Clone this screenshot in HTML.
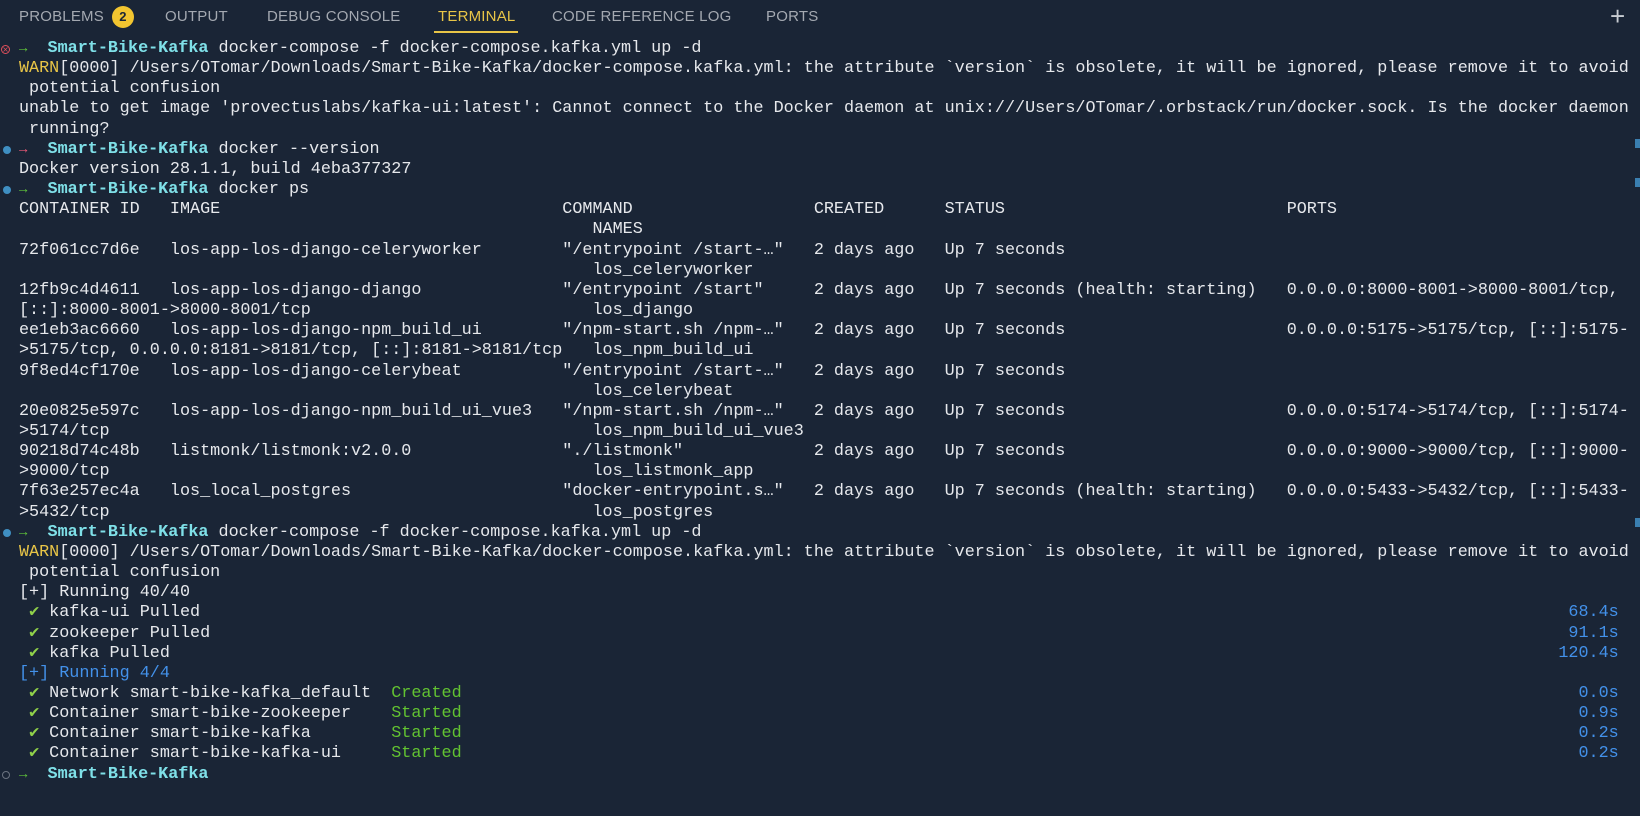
<!DOCTYPE html>
<html><head><meta charset="utf-8"><style>
html,body{margin:0;padding:0;background:#1a2536;width:1640px;height:816px;overflow:hidden}
.tabs{position:absolute;left:0;top:0;width:1640px;height:34px;font-family:"Liberation Sans",sans-serif;font-size:15px;color:#a4a9b1;letter-spacing:0.2px}
.tabs span{position:absolute;top:8px}
.badge{position:absolute;left:112px;top:6px;width:22px;height:22px;border-radius:50%;background:#f2c530;color:#1a2536;font-size:13px;font-weight:bold;text-align:center;line-height:22px}
.ul{position:absolute;left:434px;top:31px;width:84px;height:2px;background:#e8c547}
.term{position:absolute;left:19px;top:39px;font-family:"Liberation Mono",monospace;font-size:16.78px;color:#e6e8ec}
.l{position:relative;height:20.17px;line-height:20.17px;white-space:pre}
.l span.a{position:absolute;top:0}
.g{display:inline-block;width:1ch;text-align:center}
.ar{font-weight:bold;font-size:14px}
.cy{color:#7fe0e8;font-weight:bold}
.ga{color:#5fc43a}
.ra{color:#f05a78}
.w{color:#e8c547}
.b{color:#4391ea}
.gr{color:#62c231}
.ck{color:#8fd04a}
.m{position:absolute;left:-16px;top:6px;width:8px;height:8px;border-radius:50%}
.dot{background:#3f8fc2}
.x{border:1.3px solid #e0505c;width:7px;height:7px;left:-18px;color:#e0505c;font-size:8px;line-height:7px;text-align:center;font-style:normal;font-family:"DejaVu Sans",sans-serif}
.o{border:1.3px solid #6b7380;width:6px;height:6px;left:-17px}
.sb{position:absolute;left:1635px;width:5px;height:9px;background:#3a7fb0}
</style></head><body>
<div class="tabs">
<span style="left:19px">PROBLEMS</span><div class="badge">2</div>
<span style="left:165px">OUTPUT</span>
<span style="left:267px">DEBUG CONSOLE</span>
<span style="left:438px;color:#e8c547">TERMINAL</span>
<span style="left:552px">CODE REFERENCE LOG</span>
<span style="left:766px">PORTS</span>
<span style="left:1610px;top:1px;font-size:26px;font-weight:300;color:#c8ccd2">+</span>
</div>
<div class="ul"></div>
<div class="sb" style="top:139px"></div><div class="sb" style="top:178px"></div><div class="sb" style="top:518px"></div>
<div class="term">
<div class="l"><i class="m x">×</i><span class="g ga ar">→</span>  <span class="cy">Smart-Bike-Kafka</span> docker-compose -f docker-compose.kafka.yml up -d</div>
<div class="l"><span class="w">WARN</span>[0000] /Users/OTomar/Downloads/Smart-Bike-Kafka/docker-compose.kafka.yml: the attribute `version` is obsolete, it will be ignored, please remove it to avoid</div>
<div class="l"> potential confusion</div>
<div class="l">unable to get image 'provectuslabs/kafka-ui:latest': Cannot connect to the Docker daemon at unix:///Users/OTomar/.orbstack/run/docker.sock. Is the docker daemon</div>
<div class="l"> running?</div>
<div class="l"><i class="m dot"></i><span class="g ra ar">→</span>  <span class="cy">Smart-Bike-Kafka</span> docker --version</div>
<div class="l">Docker version 28.1.1, build 4eba377327</div>
<div class="l"><i class="m dot"></i><span class="g ga ar">→</span>  <span class="cy">Smart-Bike-Kafka</span> docker ps</div>
<div class="l"><span class="a" style="left:0">CONTAINER ID</span><span class="a" style="left:15ch">IMAGE</span><span class="a" style="left:54ch">COMMAND</span><span class="a" style="left:79ch">CREATED</span><span class="a" style="left:92ch">STATUS</span><span class="a" style="left:126ch">PORTS</span></div>
<div class="l"><span class="a" style="left:57ch">NAMES</span></div>
<div class="l"><span class="a" style="left:0">72f061cc7d6e</span><span class="a" style="left:15ch">los-app-los-django-celeryworker</span><span class="a" style="left:54ch">"/entrypoint /start-<span class="g">…</span>"</span><span class="a" style="left:79ch">2 days ago</span><span class="a" style="left:92ch">Up 7 seconds</span></div>
<div class="l"><span class="a" style="left:57ch">los_celeryworker</span></div>
<div class="l"><span class="a" style="left:0">12fb9c4d4611</span><span class="a" style="left:15ch">los-app-los-django-django</span><span class="a" style="left:54ch">"/entrypoint /start"</span><span class="a" style="left:79ch">2 days ago</span><span class="a" style="left:92ch">Up 7 seconds (health: starting)</span><span class="a" style="left:126ch">0.0.0.0:8000-8001-&gt;8000-8001/tcp,</span></div>
<div class="l"><span class="a" style="left:0">[::]:8000-8001-&gt;8000-8001/tcp</span><span class="a" style="left:57ch">los_django</span></div>
<div class="l"><span class="a" style="left:0">ee1eb3ac6660</span><span class="a" style="left:15ch">los-app-los-django-npm_build_ui</span><span class="a" style="left:54ch">"/npm-start.sh /npm-<span class="g">…</span>"</span><span class="a" style="left:79ch">2 days ago</span><span class="a" style="left:92ch">Up 7 seconds</span><span class="a" style="left:126ch">0.0.0.0:5175-&gt;5175/tcp, [::]:5175-</span></div>
<div class="l"><span class="a" style="left:0">&gt;5175/tcp, 0.0.0.0:8181-&gt;8181/tcp, [::]:8181-&gt;8181/tcp</span><span class="a" style="left:57ch">los_npm_build_ui</span></div>
<div class="l"><span class="a" style="left:0">9f8ed4cf170e</span><span class="a" style="left:15ch">los-app-los-django-celerybeat</span><span class="a" style="left:54ch">"/entrypoint /start-<span class="g">…</span>"</span><span class="a" style="left:79ch">2 days ago</span><span class="a" style="left:92ch">Up 7 seconds</span></div>
<div class="l"><span class="a" style="left:57ch">los_celerybeat</span></div>
<div class="l"><span class="a" style="left:0">20e0825e597c</span><span class="a" style="left:15ch">los-app-los-django-npm_build_ui_vue3</span><span class="a" style="left:54ch">"/npm-start.sh /npm-<span class="g">…</span>"</span><span class="a" style="left:79ch">2 days ago</span><span class="a" style="left:92ch">Up 7 seconds</span><span class="a" style="left:126ch">0.0.0.0:5174-&gt;5174/tcp, [::]:5174-</span></div>
<div class="l"><span class="a" style="left:0">&gt;5174/tcp</span><span class="a" style="left:57ch">los_npm_build_ui_vue3</span></div>
<div class="l"><span class="a" style="left:0">90218d74c48b</span><span class="a" style="left:15ch">listmonk/listmonk:v2.0.0</span><span class="a" style="left:54ch">"./listmonk"</span><span class="a" style="left:79ch">2 days ago</span><span class="a" style="left:92ch">Up 7 seconds</span><span class="a" style="left:126ch">0.0.0.0:9000-&gt;9000/tcp, [::]:9000-</span></div>
<div class="l"><span class="a" style="left:0">&gt;9000/tcp</span><span class="a" style="left:57ch">los_listmonk_app</span></div>
<div class="l"><span class="a" style="left:0">7f63e257ec4a</span><span class="a" style="left:15ch">los_local_postgres</span><span class="a" style="left:54ch">"docker-entrypoint.s<span class="g">…</span>"</span><span class="a" style="left:79ch">2 days ago</span><span class="a" style="left:92ch">Up 7 seconds (health: starting)</span><span class="a" style="left:126ch">0.0.0.0:5433-&gt;5432/tcp, [::]:5433-</span></div>
<div class="l"><span class="a" style="left:0">&gt;5432/tcp</span><span class="a" style="left:57ch">los_postgres</span></div>
<div class="l"><i class="m dot"></i><span class="g ga ar">→</span>  <span class="cy">Smart-Bike-Kafka</span> docker-compose -f docker-compose.kafka.yml up -d</div>
<div class="l"><span class="w">WARN</span>[0000] /Users/OTomar/Downloads/Smart-Bike-Kafka/docker-compose.kafka.yml: the attribute `version` is obsolete, it will be ignored, please remove it to avoid</div>
<div class="l"> potential confusion</div>
<div class="l">[+] Running 40/40</div>
<div class="l"> <span class="g ck">✔</span> kafka-ui Pulled<span class="a b" style="left:154ch">68.4s</span></div>
<div class="l"> <span class="g ck">✔</span> zookeeper Pulled<span class="a b" style="left:154ch">91.1s</span></div>
<div class="l"> <span class="g ck">✔</span> kafka Pulled<span class="a b" style="left:153ch">120.4s</span></div>
<div class="l b">[+] Running 4/4</div>
<div class="l"> <span class="g ck">✔</span> Network smart-bike-kafka_default<span class="a gr" style="left:37ch">Created</span><span class="a b" style="left:155ch">0.0s</span></div>
<div class="l"> <span class="g ck">✔</span> Container smart-bike-zookeeper<span class="a gr" style="left:37ch">Started</span><span class="a b" style="left:155ch">0.9s</span></div>
<div class="l"> <span class="g ck">✔</span> Container smart-bike-kafka<span class="a gr" style="left:37ch">Started</span><span class="a b" style="left:155ch">0.2s</span></div>
<div class="l"> <span class="g ck">✔</span> Container smart-bike-kafka-ui<span class="a gr" style="left:37ch">Started</span><span class="a b" style="left:155ch">0.2s</span></div>
<div class="l"><i class="m o"></i><span class="g ga ar">→</span>  <span class="cy">Smart-Bike-Kafka</span></div>
</div>
</body></html>
